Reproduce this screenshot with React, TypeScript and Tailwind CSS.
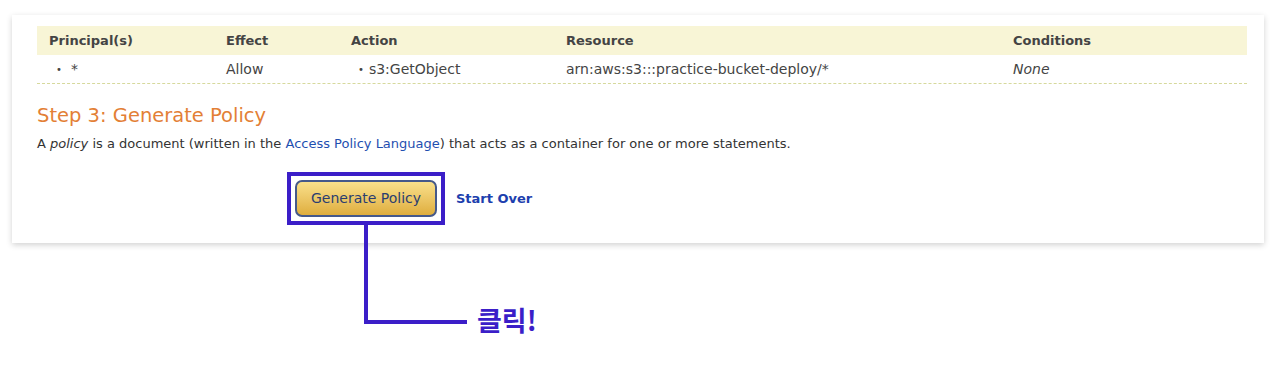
import React from 'react';

const cols = 'grid grid-cols-[177px_125px_215px_447px_1fr]';

export default function App() {
  return (
    <div className="w-full h-[368px] bg-white pt-[15px] pl-[12px] pr-[16px] font-['DejaVu_Sans',Verdana,sans-serif] text-[12px] text-[#444]">
      <div className="bg-white pt-[11px] pl-[25px] pr-[17px] pb-[18px] shadow-[0_2px_6px_rgba(0,0,0,0.18)]">
        {/* statement table */}
        <div className={`${cols} h-[29px] items-center bg-[#f8f5d6] font-bold text-[13px] text-[#444]`}>
          <div className="pl-[12px]">Principal(s)</div>
          <div className="pl-[12px]">Effect</div>
          <div className="pl-[12px]">Action</div>
          <div className="pl-[12px]">Resource</div>
          <div className="pl-[12px]">Conditions</div>
        </div>
        <div className={`${cols} h-[29px] items-center border-b border-dashed border-[#d6d99c] text-[14px] text-[#444]`}>
          <div className="pl-[19px] flex items-center gap-[9px]"><span className="text-[10px]">•</span><span>*</span></div>
          <div className="pl-[12px]">Allow</div>
          <div className="pl-[19px] flex items-center gap-[5px]"><span className="text-[10px]">•</span><span>s3:GetObject</span></div>
          <div className="pl-[12px]">arn:aws:s3:::practice-bucket-deploy/*</div>
          <div className="pl-[12px] italic">None</div>
        </div>

        <h2 className="mt-[20px] text-[19.5px] leading-[24px] text-[#e37f36]">Step 3: Generate Policy</h2>
        <p className="mt-[7px] leading-[18px] text-[13px] text-[#333]">
          A <i>policy</i> is a document (written in the <span className="text-[#1f4fb0]">Access Policy Language</span>) that acts as a container for one or more statements.
        </p>

        <div className="mt-[19px] ml-[250px] flex items-center gap-[11px]">
          <div className="relative border-[4px] border-[#3b1ec8] p-[4px]">
            <button className="w-[142px] h-[37px] rounded-[7px] border-2 border-[#45598a] bg-gradient-to-b from-[#f9e08a] to-[#dfae3c] text-[14px] font-medium text-[#2a3d70] font-['DejaVu_Sans',sans-serif]">
              Generate Policy
            </button>
            {/* annotation connector */}
            <div className="absolute left-[73px] top-[calc(100%+4px)] w-[4px] h-[99px] bg-[#3b1ec8]" />
            <div className="absolute left-[73px] top-[calc(100%+99px)] w-[103px] h-[4px] bg-[#3b1ec8]" />
            <div className="absolute left-[186px] top-[calc(100%+83px)] whitespace-nowrap text-[27px] leading-[32px] font-bold text-[#3b1ec8] font-['Noto_Sans_CJK_KR',sans-serif]">
              클릭!
            </div>
          </div>
          <span className="font-bold text-[13px] text-[#1d3fae]">Start Over</span>
        </div>
      </div>
    </div>
  );
}
